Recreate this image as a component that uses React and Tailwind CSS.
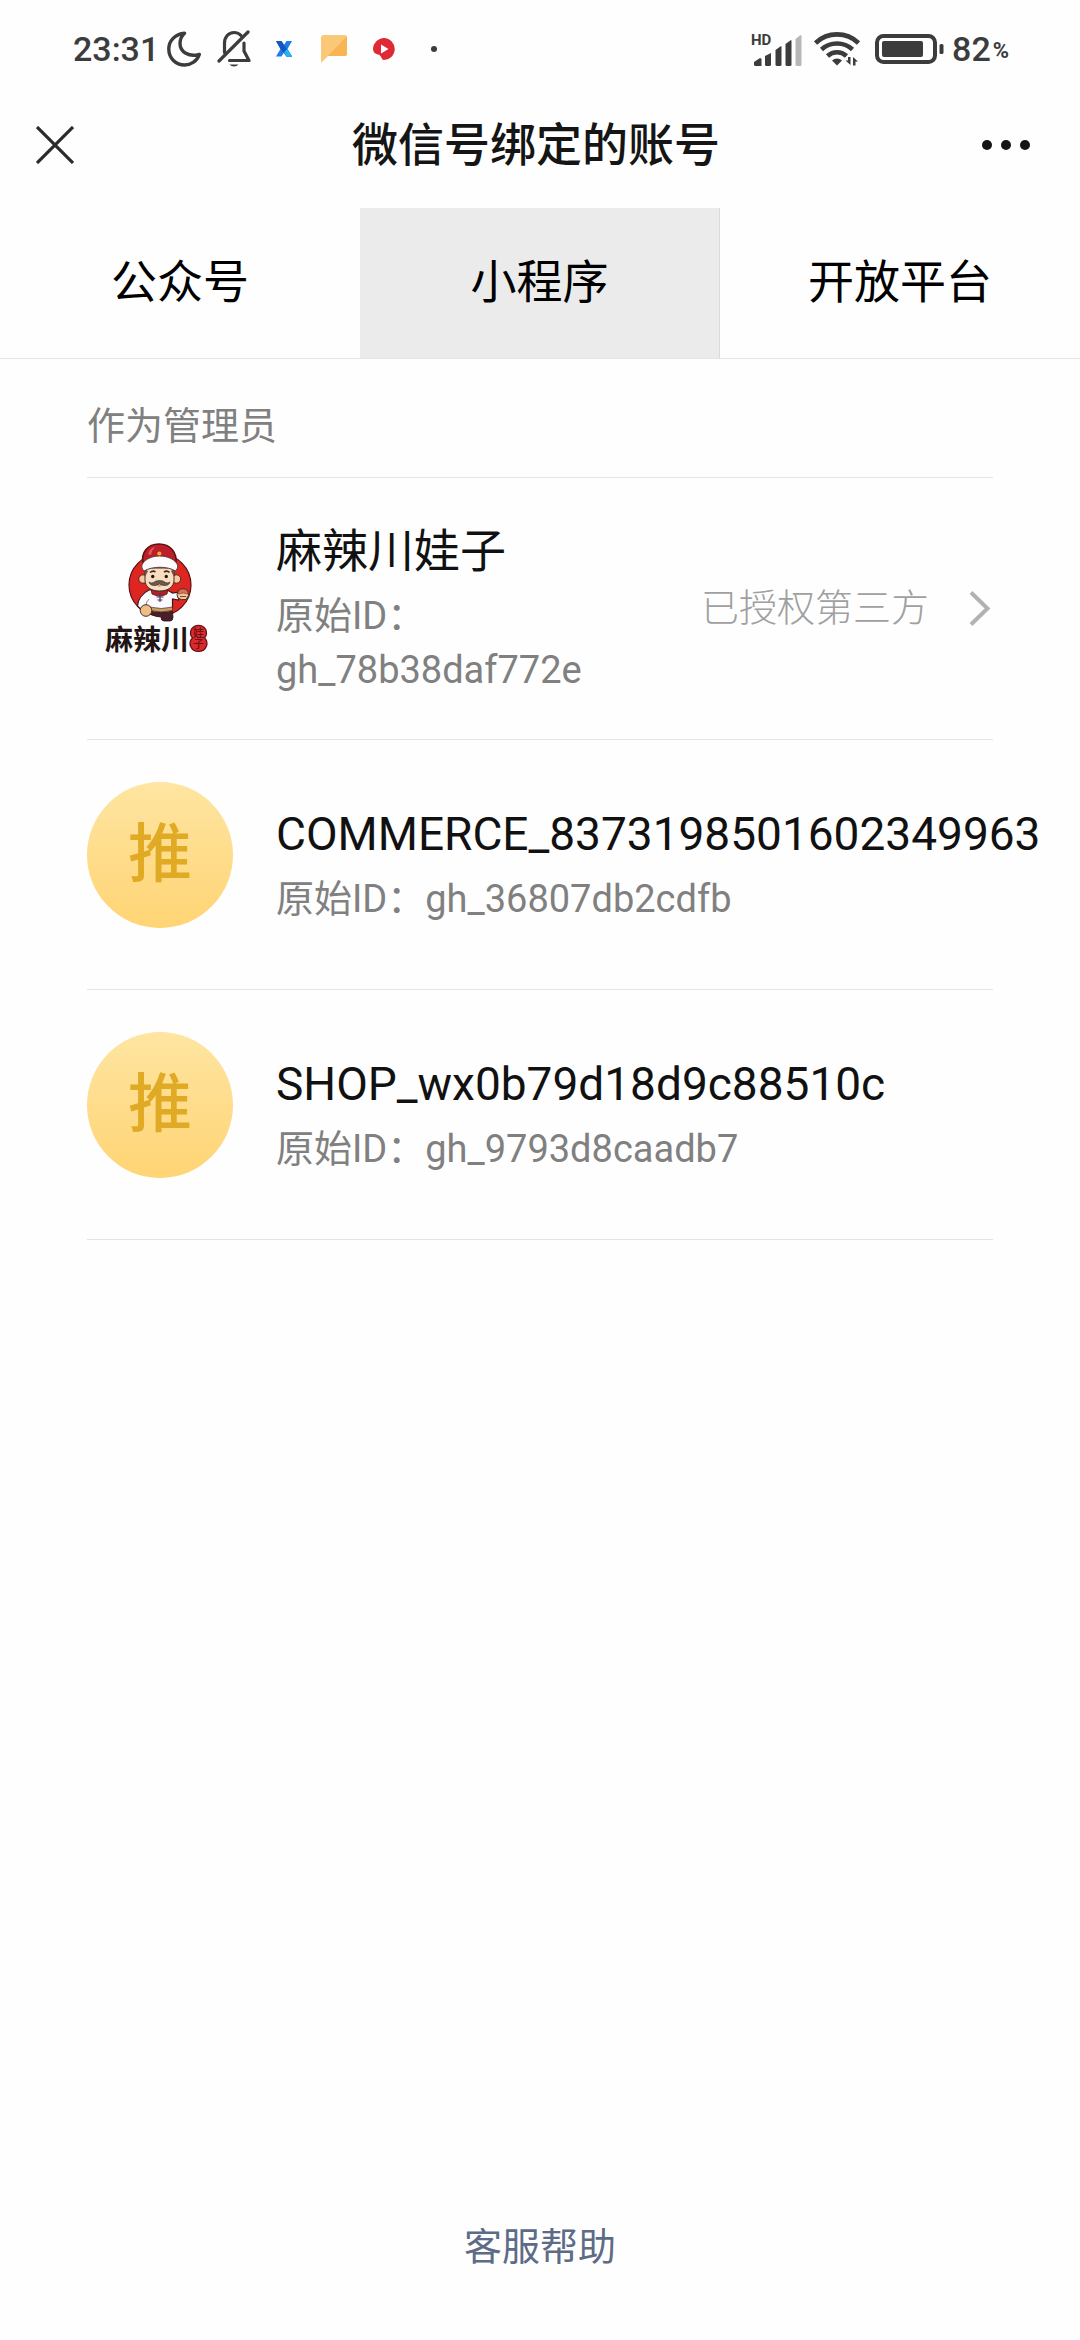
import React, { useState } from 'react'

const tabs = ['公众号', '小程序', '开放平台']

const accounts = [
  { name: '麻辣川娃子', id: 'gh_78b38daf772e', status: '已授权第三方', logo: true },
  { name: 'COMMERCE_8373198501602349963', id: 'gh_36807db2cdfb' },
  { name: 'SHOP_wx0b79d18d9c88510c', id: 'gh_9793d8caadb7' },
]

const StatusBar = () => (
  <div className="flex h-[98px] items-center justify-between pl-[73px] pr-[71px] text-[#3c3c3c]">
    <div className="flex items-center">
      <span className="w-[94px] text-[34px] leading-10 font-medium">23:31</span>
      <svg className="w-[34px] h-9" viewBox="0 0 34 36" fill="none" stroke="currentColor" strokeWidth="3.4" strokeLinejoin="round">
        <path d="M17.5 2.2C8 3 1.8 10 1.8 18c0 9.200 7 16 15.800 16 6.500 0 12.500-4 14.700-10.600C22 26.500 13 21 13 12.500c0-4 1.500-7.500 4.500-10.300z" />
      </svg>
      <svg className="ml-4 w-[34px] h-[38px]" viewBox="0 0 34 38" fill="none" stroke="currentColor" strokeWidth="3.2" strokeLinecap="round" strokeLinejoin="round">
        <path d="M7.500 22.500V13.500C7.500 7 11.500 2.500 17 2.500c3 0 5.200 1 7 3" />
        <path d="M27 13v8l5 9.500H12.500" />
        <path d="M31 2 2 31" />
        <path d="M12.500 34.500c1.200 1.300 2.700 2 4.500 2s3.300-.7 4.500-2z" fill="currentColor" stroke="none" />
      </svg>
      <div className="ml-2 grid grid-cols-[50px_50px_50px_50px] place-items-center">
        <svg className="size-4" viewBox="0 0 16 16">
          <path d="M0 0h5.500L8 4l2.500-4H16l-4.500 8L16 15.500h-5.500L8 11.500l-2.500 4H0L4.500 8z" fill="#1f7be8" />
          <path d="M0 0h5.500l8 12L16 15.500h-5.500L4.500 8z" fill="#1557c0" />
          <path d="M10.500 15.500 8 11.500 10 9l1.500-1L16 15.500z" fill="#22b4f4" />
        </svg>
        <svg className="w-[26px] h-7" viewBox="0 0 26 28">
          <path d="M2.500 0h21A2.500 2.500 0 0 1 26 2.500v16a2.500 2.500 0 0 1-2.500 2.500H7L0 28V2.500A2.500 2.500 0 0 1 2.500 0z" fill="#fac877" />
          <path d="M26 1v17.500a2.500 2.500 0 0 1-2.500 2.500H7z" fill="#f8b551" />
        </svg>
        <svg className="size-[22px]" viewBox="0 0 22 22">
          <path d="M11 0a11 11 0 1 1-.5 22C8 21 8.500 17 5 16.500 2 16 0 14 0 11 .3 5 5 0 11 0z" fill="#df2a36" />
          <path d="M8 6.500 15.500 11 8 15.500z" fill="#fff" />
        </svg>
        <span className="size-1.5 rounded-full bg-[#3c3c3c]" />
      </div>
    </div>

    <div className="flex items-center">
      <svg className="w-[52px] h-9" viewBox="-2 -2 52 36" fill="currentColor">
        <text x="-1" y="12" fontSize="15" fontWeight="700">HD</text>
        <path d="M2 29l6-4q1.500 0 1.500 1.500V33H3.500Q2 33 2 31.500z" />
        <path d="M13 23l6-3v11.500Q19 33 17.500 33H14.500Q13 33 13 31.500z" />
        <path d="M23.500 17l5.500-4q.5 0 .5 1.500v17Q29.500 33 28 33H25Q23.500 33 23.500 31.500z" />
        <path d="M33.500 11l5.500-4q.5 0 .5 1.500v23Q39.500 33 38 33H35Q33.500 33 33.500 31.500z" />
        <path d="M43.500 6l5-4q1 0 1 1.500v28Q49.500 33 48 33H45Q43.500 33 43.500 31.500z" fill="#b7b7b7" />
      </svg>
      <svg className="ml-3 w-[46px] h-9" viewBox="0 0 46 36" fill="none" stroke="currentColor" strokeWidth="4.600">
        <path d="M1.500 12C13.500.5 32.500.5 44.500 12" />
        <path d="M7.500 18.500c8.500-8 22.500-8 31 0" />
        <path d="M13.500 25c5.500-5 13.500-5 19 0" />
        <path d="M18 29.500c2.800-2.700 7.200-2.700 10 0L23 34.500z" fill="currentColor" stroke="none" />
        <path d="M36.500 26v8l-5-4.500h2.500V26zM39 34.500v-8.500l5 4.500h-2.500v4z" fill="currentColor" stroke="none" />
      </svg>
      <svg className="ml-[15px] w-[69px] h-[30px]" viewBox="0 0 69 30">
        <rect x="2" y="2" width="58" height="26" rx="6.500" fill="none" stroke="currentColor" strokeWidth="4" />
        <rect x="7" y="7" width="41" height="16" rx="2" fill="currentColor" />
        <rect x="64.500" y="10" width="4" height="10" rx="1.500" fill="currentColor" />
      </svg>
      <span className="ml-2 text-[34px] leading-10 font-medium">82</span>
      <span className="ml-0.5 self-end pb-0.5 text-[22px] leading-8 font-bold">%</span>
    </div>
  </div>
)

const ChefLogo = () => (
  <svg className="mt-[42px] size-[146px] shrink-0" viewBox="-7 -12 146 146">
    {/* red disc behind the figure */}
    <circle cx="66" cy="53" r="31" fill="#de2522" stroke="#5a1212" strokeWidth="1.200" />
    {/* legs and shoes */}
    <path d="M57 77h21l1 8q0 4-3 4h-6q-3 0-3-4-6 0-10-3z" fill="#4a2028" stroke="#2f1216" strokeWidth=".8" />
    {/* shirt, sleeves, belt */}
    <path d="M55 58c-6 3-11 9-11.500 16l3 3 9-2v1q11 3 23 0V67l6 1 1-8-7 1q-3-2-6-3z" fill="#fbfbfd" stroke="#35191a" strokeWidth="1.200" />
    <path d="M55 67q-3 3-3 6" fill="none" stroke="#8b8796" />
    <path d="M55.500 75q12 3 23 0v3.500q-11 3-23 0z" fill="#c9a063" stroke="#4b2a1c" strokeWidth=".7" />
    <path d="M57 57q9 5 17 0l-1 5q-7 4-15 0z" fill="#b71f26" stroke="#4a1616" strokeWidth=".8" />
    <path d="M66 61v9M62.500 65h7M63.500 68h5" stroke="#4d3163" strokeWidth="1.200" />
    {/* hands */}
    <circle cx="52" cy="78.500" r="5.800" fill="#edbf82" stroke="#4b2a1c" />
    <path d="M84 59q5-5 10 0 2 5-2 8.500-5 1-8-1.500-2-3 0-7z" fill="#f3c39c" stroke="#4b2a1c" />
    <path d="M84 60q5-6 10 0l-.5 2q-4-2-9 0z" fill="#d97450" stroke="#7a3020" strokeWidth=".6" />
    <path d="M86 64.500h6" stroke="#7a4a30" />
    {/* head */}
    <circle cx="49" cy="47" r="4.200" fill="#f3c8a3" stroke="#4b2a1c" />
    <circle cx="82.500" cy="47" r="4.200" fill="#f3c8a3" stroke="#4b2a1c" />
    <path d="M51 36h29v12c0 7-6 11-14.500 11S51 55 51 48z" fill="#f9ddc1" stroke="#4b2a1c" />
    <path d="M51 36v9l3-6zM80 36v9l-3-6z" fill="#655650" />
    <path d="M56 40.500q3-2.500 5.500-.5M70 40q3-2 5.500.5" fill="none" stroke="#3b2a25" strokeWidth="1.600" />
    <circle cx="58.700" cy="44.500" r="1.700" fill="#221616" />
    <circle cx="72.300" cy="44.500" r="1.700" fill="#221616" />
    <path d="M65.500 48.500q-4 0-6 2-2.500 1.200-4.500-.5c1 4 6 4.500 10.500 2 4.500 2.500 9.500 2 10.500-2q-2 1.700-4.500.5-2-2-6-2z" fill="#6b5a4e" stroke="#35261f" strokeWidth=".6" />
    <path d="M63.500 53.500h4q-2 2.200-4 0z" fill="#c4503e" />
    {/* hat */}
    <path d="M49 31c-2-10 4-19 16-19s18 9 17 19z" fill="#bd1e28" stroke="#571014" strokeWidth="1.500" />
    <path d="M54 22q2-6 7-7-3 3-4 8z" fill="#dc5a5a" />
    <path d="M50 39q-4-4-1-8c3-4 9-7 16.500-7s14 3 17 7q3 4-1 8c-8-5-23-5-31.500 0z" fill="#fcfafa" stroke="#5a4444" />
    <circle cx="65.300" cy="21.500" r="2.100" fill="#ecab3a" />
    {/* wordmark and seal */}
    <text x="11" y="118" fontSize="28" fontWeight="700" fill="#231414">麻辣川</text>
    <path d="M97.500 97a8.500 8.500 0 0 1 14 0q2.500 5-1 9 3.500 3 2 8a8.600 8.600 0 0 1-16 0q-1.500-5 2-8-3.500-4-1-9z" fill="#d92a2c" stroke="#6a1014" strokeWidth="1.300" />
    <text x="104.500" y="105" fontSize="11" fontWeight="500" textAnchor="middle" fill="#6d1014">娃</text>
    <text x="104.500" y="116" fontSize="11" fontWeight="500" textAnchor="middle" fill="#6d1014">子</text>
  </svg>
)

const Account = ({ account }) => (
  <li className="flex min-h-[250px] border-b border-[#e4e4e4]">
    {account.logo
      ? <ChefLogo />
      : <span className="mt-[42px] flex size-[146px] shrink-0 items-center justify-center rounded-full bg-linear-to-b from-[#fee5a1] to-[#ffd474] text-[64px] leading-none font-medium text-[#e0aa24]">推</span>
    }
    <div className="ml-[43px] flex min-w-0 flex-1 items-center pt-[41px] pb-[42px]">
      <div className="min-w-0 flex-1">
        <p className="text-[46px] leading-[64px] text-[#111] whitespace-nowrap">{account.name}</p>
        <p className="mt-1.5 text-[38px] leading-[54px] text-[#808080]">原始ID：{account.logo ? <br /> : null}{account.id}</p>
      </div>
      {account.status && (
        <a href="#" className="flex items-center gap-10 text-[38px] leading-[54px] font-light text-[#a0a0a0]">
          {account.status}
          <svg className="w-6 h-9" viewBox="0 0 24 36" fill="none" stroke="#b2b2b2" strokeWidth="4">
            <path d="M2 2.500 18.500 18.500 2 34.500" />
          </svg>
        </a>
      )}
    </div>
  </li>
)

const App = () => {
  const [active, setActive] = useState(1)

  return (
    <div className="flex min-h-screen flex-col bg-[#fefefe] font-['Roboto','Noto_Sans_CJK_SC',sans-serif]" lang="zh-CN">
      <StatusBar />

      <header className="flex h-[110px] items-center justify-between px-9 pb-4">
        <button aria-label="关闭" className="w-14">
          <svg className="size-[38px]" viewBox="0 0 38 38" fill="none" stroke="#2b2b2b" strokeWidth="3.200">
            <path d="M1 1l36 36M37 1 1 37" />
          </svg>
        </button>
        <h1 className="text-[46px] leading-[64px] font-medium text-[#151515]">微信号绑定的账号</h1>
        <button aria-label="更多" className="flex w-16 justify-end gap-[9px] pr-3.5">
          <span className="size-2.5 shrink-0 rounded-full bg-[#151515]" />
          <span className="size-2.5 shrink-0 rounded-full bg-[#151515]" />
          <span className="size-2.5 shrink-0 rounded-full bg-[#151515]" />
        </button>
      </header>

      <nav className="grid grid-cols-3 border-b border-[#e4e4e4]">
        {tabs.map((tab, i) => (
          <button
            key={tab}
            onClick={() => setActive(i)}
            className={`h-[150px] pb-0.5 text-[46px] leading-[64px] text-black ${i === active ? 'bg-[#ebebeb] border-r border-[#dadada]' : ''}`}>
            {tab}
          </button>
        ))}
      </nav>

      <main className="flex-1 px-[87px]">
        <h2 className="border-b border-[#e4e4e4] pt-10 pb-6 text-[38px] leading-[54px] text-[#808080]">作为管理员</h2>
        <ul>
          {accounts.map(account => <Account key={account.id} account={account} />)}
        </ul>
      </main>

      <footer className="pb-[66px] text-center">
        <a href="#" className="text-[38px] leading-[54px] text-[#5d6b86]">客服帮助</a>
      </footer>
    </div>
  )
}

export default App
